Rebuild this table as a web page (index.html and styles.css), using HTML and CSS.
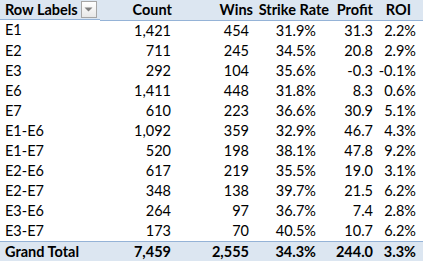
FILE: index.html
```html
<!DOCTYPE html>
<html>
<head>
<meta charset="utf-8">
<link rel="stylesheet" href="styles.css">
</head>
<body>
<table class="pivot">
  <colgroup>
    <col class="c-label"><col class="c-count"><col class="c-wins"><col class="c-sr"><col class="c-profit"><col class="c-roi">
  </colgroup>
  <thead>
    <tr class="head">
      <th class="label"><span class="rl">Row Labels</span><span class="dd"><svg width="9" height="5" viewBox="0 0 9 5"><path d="M0.5 0.5h8L4.5 4.5z" fill="#7f7f7f"/></svg></span></th>
      <th class="count">Count</th>
      <th class="wins">Wins</th>
      <th class="sr">Strike Rate</th>
      <th class="profit">Profit</th>
      <th class="roi">ROI</th>
    </tr>
  </thead>
  <tbody>
    <tr><td class="label">E1</td><td class="count">1,421</td><td class="wins">454</td><td class="sr">31.9%</td><td class="profit">31.3</td><td class="roi">2.2%</td></tr>
    <tr><td class="label">E2</td><td class="count">711</td><td class="wins">245</td><td class="sr">34.5%</td><td class="profit">20.8</td><td class="roi">2.9%</td></tr>
    <tr><td class="label">E3</td><td class="count">292</td><td class="wins">104</td><td class="sr">35.6%</td><td class="profit">-0.3</td><td class="roi">-0.1%</td></tr>
    <tr><td class="label">E6</td><td class="count">1,411</td><td class="wins">448</td><td class="sr">31.8%</td><td class="profit">8.3</td><td class="roi">0.6%</td></tr>
    <tr><td class="label">E7</td><td class="count">610</td><td class="wins">223</td><td class="sr">36.6%</td><td class="profit">30.9</td><td class="roi">5.1%</td></tr>
    <tr><td class="label">E1-E6</td><td class="count">1,092</td><td class="wins">359</td><td class="sr">32.9%</td><td class="profit">46.7</td><td class="roi">4.3%</td></tr>
    <tr><td class="label">E1-E7</td><td class="count">520</td><td class="wins">198</td><td class="sr">38.1%</td><td class="profit">47.8</td><td class="roi">9.2%</td></tr>
    <tr><td class="label">E2-E6</td><td class="count">617</td><td class="wins">219</td><td class="sr">35.5%</td><td class="profit">19.0</td><td class="roi">3.1%</td></tr>
    <tr><td class="label">E2-E7</td><td class="count">348</td><td class="wins">138</td><td class="sr">39.7%</td><td class="profit">21.5</td><td class="roi">6.2%</td></tr>
    <tr><td class="label">E3-E6</td><td class="count">264</td><td class="wins">97</td><td class="sr">36.7%</td><td class="profit">7.4</td><td class="roi">2.8%</td></tr>
    <tr><td class="label">E3-E7</td><td class="count">173</td><td class="wins">70</td><td class="sr">40.5%</td><td class="profit">10.7</td><td class="roi">6.2%</td></tr>
  </tbody>
  <tfoot>
    <tr class="total"><td class="label">Grand Total</td><td class="count">7,459</td><td class="wins">2,555</td><td class="sr">34.3%</td><td class="profit">244.0</td><td class="roi">3.3%</td></tr>
  </tfoot>
</table>
</body>
</html>
```
FILE: styles.css
```css
html, body {
  margin: 0;
  padding: 0;
  background: #ffffff;
}
.pivot {
  border-collapse: collapse;
  table-layout: fixed;
  width: 423px;
  font-family: Lato, "Open Sans", sans-serif;
  font-size: 14.5px;
  color: #000000;
}
.c-label { width: 100px; }
.c-count { width: 78px; }
.c-wins { width: 80px; }
.c-sr { width: 76px; }
.c-profit { width: 44px; }
.c-roi { width: 45px; }

.pivot th, .pivot td {
  padding: 0;
  height: 20px;
  line-height: 20px;
  text-align: right;
  white-space: nowrap;
  overflow: visible;
}
.pivot th { font-weight: bold; }
.pivot .label { text-align: left; padding-left: 5px; }

.head th {
  background: #dce6f1;
  height: 19px;
  line-height: 19px;
  border-bottom: 1px solid #95b3d7;
}
.head .label { display: flex; align-items: center; height: 19px; }
.rl { display: inline-block; }
.dd {
  margin-left: 3px;
  width: 14px;
  height: 15px;
  border: 1px solid #a6a6a6;
  background: linear-gradient(#ffffff, #e8e8e8);
  display: flex;
  align-items: center;
  justify-content: center;
}
.dd svg { display: block; }

.head .count { padding-right: 6px; }
.head .wins { padding-right: 5px; }
.head .sr { padding-right: 5px; }
.head .profit { padding-right: 5px; }
.head .roi { padding-right: 12px; }

td.count { padding-right: 7px; }
td.wins { padding-right: 9px; }
td.sr { padding-right: 18px; }
td.profit { padding-right: 5px; }
td.roi { padding-right: 7px; }

.total td {
  background: #dce6f1;
  border-top: 1px solid #95b3d7;
  font-weight: bold;
  height: 20px;
  line-height: 20px;
}
```
